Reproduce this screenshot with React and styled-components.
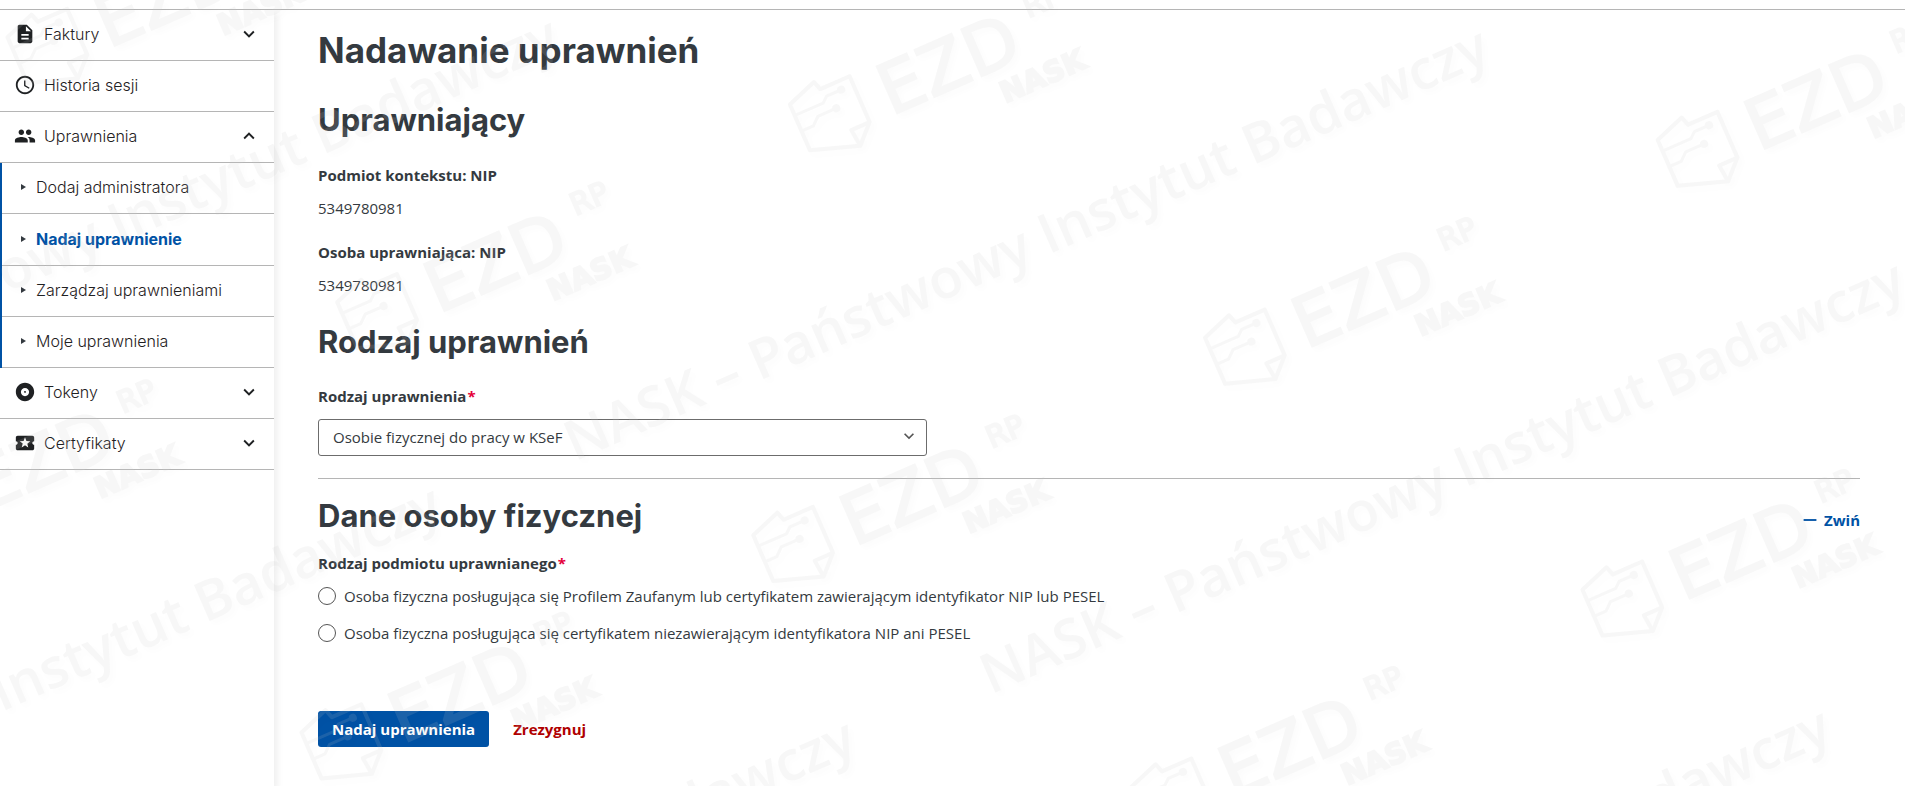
import React, { useState } from 'react';
import styled, { createGlobalStyle } from 'styled-components';
import {
  MdDescription,
  MdAccessTime,
  MdPeople,
  MdAlbum,
  MdLocalActivity,
  MdExpandMore,
  MdExpandLess,
  MdRemove,
} from 'react-icons/md';

const menu = [
  { label: 'Faktury', icon: MdDescription, expandable: true },
  { label: 'Historia sesji', icon: MdAccessTime },
  {
    label: 'Uprawnienia',
    icon: MdPeople,
    expandable: true,
    items: ['Dodaj administratora', 'Nadaj uprawnienie', 'Zarządzaj uprawnieniami', 'Moje uprawnienia'],
  },
  { label: 'Tokeny', icon: MdAlbum, expandable: true },
  { label: 'Certyfikaty', icon: MdLocalActivity, expandable: true },
];

const subjects = [
  'Osoba fizyczna posługująca się Profilem Zaufanym lub certyfikatem zawierającym identyfikator NIP lub PESEL',
  'Osoba fizyczna posługująca się certyfikatem niezawierającym identyfikatora NIP ani PESEL',
];

// both lists are in the rotated coordinates of the watermark
const logos = [
  [-10, 35],
  [186, 410], [680, 410], [-308, 410],
  [-19, 790], [474, 790], [967, 790], [1461, 790],
  [720, 1172], [1212, 1172],
];
const lines = [
  [-506, 271], [637, 271],
  [-801, 653], [342, 653],
  [-515, 1033], [630, 1033],
  [383, 1413],
];

const Sidebar = () => {
  const [open, setOpen] = useState('Uprawnienia');

  return (
    <Side>
      <ul>
        {menu.map(({ label, icon: Icon, expandable, items }) => (
          <li key={label}>
            <MenuButton type="button" onClick={() => setOpen(open === label ? '' : label)}>
              <Icon size={22} />
              <span>{label}</span>
              {expandable && (open === label ? <MdExpandLess size={22} /> : <MdExpandMore size={22} />)}
            </MenuButton>
            {items && open === label && (
              <SubMenu>
                {items.map((item) => (
                  <li key={item}>
                    <SubLink href="#" $active={item === 'Nadaj uprawnienie'}>{item}</SubLink>
                  </li>
                ))}
              </SubMenu>
            )}
          </li>
        ))}
      </ul>
    </Side>
  )
}

const Watermark = () => {
  return (
    <Overlay aria-hidden="true">
      <defs>
        <g id="badge" fill="none" strokeWidth="4" strokeLinejoin="round">
          <path d="M2 2 L33 -9 L36 0 L68 0 L68 50 L50 68 L2 52 Z" />
          <path d="M68 50 H48 L50 68" />
          <path d="M2 14 H33 L39 9 H54 M2 31 H15 L23 24 H43" strokeWidth="3" />
          <circle cx="55" cy="9" r="2" />
          <circle cx="43" cy="24" r="2" />
        </g>
      </defs>
      <g transform="rotate(-23.6)">
        {logos.map(([x, y]) => (
          <g key={`${x}-${y}`} transform={`translate(${x} ${y})`}>
            <use href="#badge" stroke="#c6c6c6" />
            <LogoText x="90" y="53" $size={70}>EZD</LogoText>
            <LogoText x="255" y="18" $size={30}>RP</LogoText>
            <LogoText x="200" y="87" $size={29} $weight={700}>NASK</LogoText>
          </g>
        ))}
        {lines.map(([x, y]) => (
          <LineText key={`${x}-${y}`} x={x} y={y}>NASK – Państwowy Instytut Badawczy</LineText>
        ))}
      </g>
    </Overlay>
  )
}

const App = () => {
  const [subject, setSubject] = useState('');
  const [expanded, setExpanded] = useState(true);

  return (
    <>
      <GlobalStyle />
      <Page>
        <Sidebar />
        <Main>
          <h1>Nadawanie uprawnień</h1>
          <h2>Uprawniający</h2>
          <Details>
            <dt>Podmiot kontekstu: NIP</dt>
            <dd>5349780981</dd>
            <dt>Osoba uprawniająca: NIP</dt>
            <dd>5349780981</dd>
          </Details>

          <h2>Rodzaj uprawnień</h2>
          <form>
            <Label htmlFor="kind">Rodzaj uprawnienia<Star>*</Star></Label>
            <SelectBox>
              <select id="kind">
                <option>Osobie fizycznej do pracy w KSeF</option>
              </select>
              <MdExpandMore size={20} />
            </SelectBox>

            <SectionHead>
              <h2>Dane osoby fizycznej</h2>
              <Toggle type="button" onClick={() => setExpanded(!expanded)}>
                <MdRemove size={22} />
                {expanded ? 'Zwiń' : 'Rozwiń'}
              </Toggle>
            </SectionHead>
            {expanded && (
              <Fieldset>
                <legend>Rodzaj podmiotu uprawnianego<Star>*</Star></legend>
                {subjects.map((text) => (
                  <Radio key={text}>
                    <input
                      type="radio"
                      name="subject"
                      checked={subject === text}
                      onChange={() => setSubject(text)}
                    />
                    {text}
                  </Radio>
                ))}
              </Fieldset>
            )}

            <Actions>
              <Submit type="button">Nadaj uprawnienia</Submit>
              <Cancel type="button">Zrezygnuj</Cancel>
            </Actions>
          </form>
        </Main>
      </Page>
      <Watermark />
    </>
  )
}

const GlobalStyle = createGlobalStyle`
  *{
    margin: 0;
    padding: 0;
    box-sizing: border-box;
  }

  body{
    background-color: #fff;
    color: #343a40;
    font-family: 'Open Sans', 'Noto Sans', sans-serif;
    font-size: 15px;
    line-height: 20px;
  }

  ul{
    list-style: none;
  }

  button, select{
    font: inherit;
    cursor: pointer;
  }
`

const Page = styled.div`
  display: flex;
  min-height: calc(100vh - 9px);
  margin-top: 9px;
  border-top: 1px solid #b5b5b5;
`

const Side = styled.nav`
  flex: none;
  width: 274px;
  box-shadow: 4px 4px 6px rgba(0, 0, 0, 0.06);
  font-family: Inter, sans-serif;
  font-size: 16px;
`

const MenuButton = styled.button`
  width: 100%;
  height: 51px;
  display: flex;
  align-items: center;
  gap: 8px;
  padding: 0 14px 2px;
  border: none;
  border-bottom: 1px solid #b5b5b5;
  background: none;
  color: #1f2123;
  font-weight: 300;
  text-align: left;

  span{
    flex: 1;
  }
`

const SubMenu = styled.ul`
  border-left: 2px solid #0052a5;
`

const SubLink = styled.a`
  height: ${({ $active }) => ($active ? 52 : 51)}px;
  display: flex;
  align-items: center;
  gap: 10px;
  padding: 0 0 2px 19px;
  border-bottom: 1px solid #b5b5b5;
  color: ${({ $active }) => ($active ? '#0052a5' : '#1f2123')};
  font-weight: ${({ $active }) => ($active ? 700 : 300)};
  text-decoration: none;

  &::before{
    content: '';
    border: 3px solid transparent;
    border-left: 5px solid #343a40;
    border-right: 0;
  }
`

const Main = styled.main`
  flex: 1;
  padding: 20px 45px 39px 44px;

  h1, h2{
    font-family: Inter, sans-serif;
    font-weight: 700;
  }
  h1{
    font-size: 35px;
    line-height: 40px;
  }
  h2{
    font-size: 31px;
    line-height: 40px;
    margin-top: 30px;
  }
`

const Details = styled.dl`
  margin-top: 25px;

  dt{
    font-weight: 700;
  }
  dd{
    margin: 13px 0 24px;
  }
  dd:last-child{
    margin-bottom: 0;
  }

  & + h2{
    margin-top: 27px;
  }
`

const Label = styled.label`
  display: block;
  margin-top: 24px;
  font-weight: 700;
`

const Star = styled.span`
  margin-left: 1px;
  color: #e4003a;
`

const SelectBox = styled.div`
  position: relative;
  width: 39.5%;
  margin-top: 13px;

  select{
    width: 100%;
    height: 37px;
    padding: 0 40px 2px 14px;
    border: 1px solid #6c6c6c;
    border-radius: 3px;
    background: none;
    color: #343a40;
    appearance: none;
  }
  svg{
    position: absolute;
    right: 8px;
    top: 7px;
    color: #555;
    pointer-events: none;
  }
`

const SectionHead = styled.div`
  display: flex;
  justify-content: space-between;
  align-items: flex-end;
  margin-top: 22px;
  border-top: 1px solid #b5b5b5;

  h2{
    margin-top: 17px;
  }
`

const Toggle = styled.button`
  display: flex;
  align-items: center;
  gap: 3px;
  margin-bottom: 5px;
  border: none;
  background: none;
  color: #0052a5;
  font-weight: 700;
`

const Fieldset = styled.fieldset`
  margin-top: 17px;
  border: none;

  legend{
    font-weight: 700;
    margin-bottom: 13px;
  }
`

const Radio = styled.label`
  display: flex;
  align-items: center;
  gap: 8px;
  margin-bottom: 17px;

  input{
    appearance: none;
    width: 18px;
    height: 18px;
    border: 1px solid #555;
    border-radius: 50%;
    background-color: #fff;
  }
  input:checked{
    border: 5px solid #0052a5;
  }
`

const Actions = styled.div`
  display: flex;
  gap: 10px;
  margin-top: 51px;
`

const Submit = styled.button`
  height: 36px;
  padding: 0 14px;
  border: none;
  border-radius: 3px;
  background-color: #0052a5;
  color: #fff;
  font-weight: 700;
`

const Cancel = styled(Submit)`
  background: none;
  color: #b00000;
`

const Overlay = styled.svg`
  position: fixed;
  top: 0;
  left: 0;
  width: 100%;
  height: 100%;
  opacity: 0.14;
  pointer-events: none;
  filter: drop-shadow(4px 4px 3px rgba(0, 0, 0, 0.1));
`

const LogoText = styled.text`
  font-family: 'DejaVu Sans', sans-serif;
  font-size: ${({ $size }) => $size}px;
  font-weight: ${({ $weight }) => $weight || 400};
  fill: #c6c6c6;
  stroke: #c6c6c6;
  stroke-width: 2px;
`

const LineText = styled.text`
  font-family: 'Open Sans', sans-serif;
  font-size: 55px;
  font-weight: 600;
  fill: #c6c6c6;
`

export default App;
